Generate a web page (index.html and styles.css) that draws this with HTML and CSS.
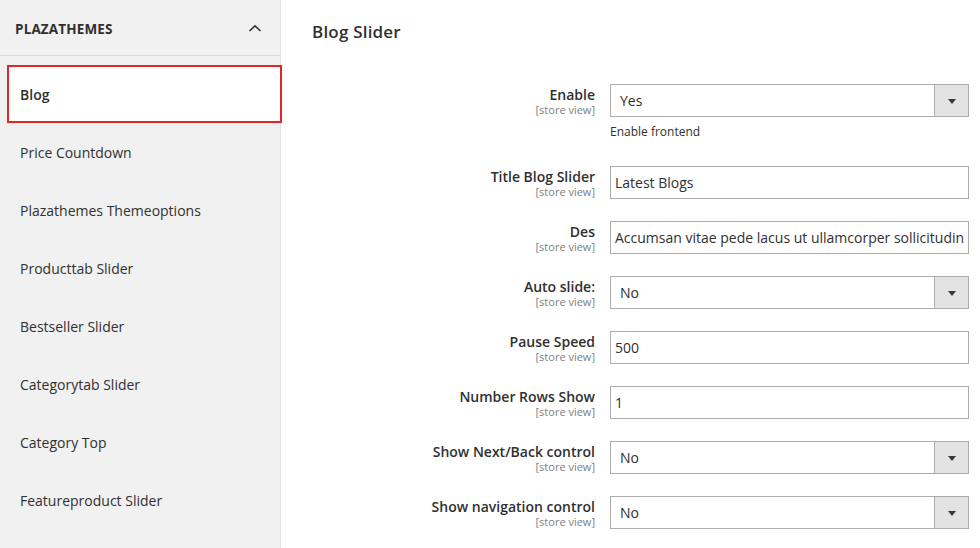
FILE: index.html
```html
<!DOCTYPE html>
<html>
<head>
<meta charset="utf-8">
<link rel="stylesheet" href="styles.css">
</head>
<body>
<div class="page">
  <aside class="sidebar">
    <div class="side-head">
      <span class="side-title">PLAZATHEMES</span>
      <svg class="chev" width="14" height="8" viewBox="0 0 14 8"><path d="M1.5 7 L7 1.8 L12.5 7" fill="none" stroke="#333" stroke-width="1.6"/></svg>
    </div>
    <ul class="side-list">
      <li class="side-item active">Blog</li>
      <li class="side-item">Price Countdown</li>
      <li class="side-item">Plazathemes Themeoptions</li>
      <li class="side-item">Producttab Slider</li>
      <li class="side-item">Bestseller Slider</li>
      <li class="side-item">Categorytab Slider</li>
      <li class="side-item">Category Top</li>
      <li class="side-item">Featureproduct Slider</li>
    </ul>
  </aside>
  <main class="main">
    <h1 class="title">Blog Slider</h1>
    <div class="form">
      <div class="row">
        <div class="label"><div class="lname">Enable</div><div class="scope">[store view]</div></div>
        <div class="field">
          <div class="select"><span class="val">Yes</span><span class="arrow"><i></i></span></div>
          <div class="note">Enable frontend</div>
        </div>
      </div>
      <div class="row">
        <div class="label"><div class="lname">Title Blog Slider</div><div class="scope">[store view]</div></div>
        <div class="field"><div class="input">Latest Blogs</div></div>
      </div>
      <div class="row">
        <div class="label"><div class="lname">Des</div><div class="scope">[store view]</div></div>
        <div class="field"><div class="input">Accumsan vitae pede lacus ut ullamcorper sollicitudin</div></div>
      </div>
      <div class="row">
        <div class="label"><div class="lname">Auto slide:</div><div class="scope">[store view]</div></div>
        <div class="field"><div class="select"><span class="val">No</span><span class="arrow"><i></i></span></div></div>
      </div>
      <div class="row">
        <div class="label"><div class="lname">Pause Speed</div><div class="scope">[store view]</div></div>
        <div class="field"><div class="input">500</div></div>
      </div>
      <div class="row">
        <div class="label"><div class="lname">Number Rows Show</div><div class="scope">[store view]</div></div>
        <div class="field"><div class="input">1</div></div>
      </div>
      <div class="row">
        <div class="label"><div class="lname">Show Next/Back control</div><div class="scope">[store view]</div></div>
        <div class="field"><div class="select"><span class="val">No</span><span class="arrow"><i></i></span></div></div>
      </div>
      <div class="row">
        <div class="label"><div class="lname">Show navigation control</div><div class="scope">[store view]</div></div>
        <div class="field"><div class="select"><span class="val">No</span><span class="arrow"><i></i></span></div></div>
      </div>
    </div>
  </main>
</div>
</body>
</html>
```

FILE: styles.css
```css
* { box-sizing: border-box; }
html, body { margin: 0; padding: 0; }
body {
  width: 980px;
  height: 548px;
  overflow: hidden;
  background: #fff;
  font-family: "Open Sans", "Liberation Sans", sans-serif;
  color: #303030;
}
.page { display: flex; height: 548px; }

.sidebar {
  width: 281px;
  flex: 0 0 281px;
  background: #f1f1f1;
  border-right: 1px solid #e3e3e3;
  height: 548px;
}
.side-head {
  height: 56px;
  border-bottom: 1px solid #dadada;
  display: flex;
  align-items: center;
  justify-content: space-between;
  padding: 2px 18px 0 15px;
}
.side-title {
  font-size: 13.5px;
  font-weight: 700;
  letter-spacing: 0.15px;
}
.chev { display: block; margin-top: -1px; }
.side-list {
  list-style: none;
  margin: 0;
  padding: 9px 0 0 0;
}
.side-item {
  height: 58px;
  display: flex;
  align-items: center;
  padding-left: 20px;
  font-size: 14px;
}
.side-item.active {
  background: #fff;
  border: 2px solid #e22626;
  margin-left: 7px;
  margin-right: -2px;
  padding-left: 11px;
  font-weight: 600;
  position: relative;
}

.main {
  flex: 1;
  padding: 0 11px 0 31px;
}
.title {
  margin: 0;
  padding-top: 20px;
  font-size: 17px;
  line-height: 24px;
  font-weight: 600;
  letter-spacing: 0.2px;
}
.form { margin-top: 40px; }
.row {
  display: grid;
  grid-template-columns: 1fr 359px;
  column-gap: 15px;
  margin-bottom: 22px;
}
.label { text-align: right; padding-top: 2px; }
.lname { font-size: 14px; font-weight: 600; line-height: 17px; }
.scope { font-size: 11px; line-height: 13px; color: #808080; }

.input, .select {
  height: 33px;
  border: 1px solid #adadad;
  background: #fff;
  display: flex;
  align-items: center;
  font-size: 14px;
  white-space: nowrap;
  overflow: hidden;
}
.input { padding-left: 4px; }
.select { padding-left: 9px; justify-content: space-between; }
.arrow {
  width: 34px;
  height: 100%;
  background: #e3e3e3;
  border-left: 1px solid #adadad;
  display: flex;
  align-items: center;
  justify-content: center;
}
.arrow i {
  width: 0; height: 0;
  border-left: 4px solid transparent;
  border-right: 4px solid transparent;
  border-top: 5px solid #41362f;
  margin-top: 1px;
}
.note {
  font-size: 12px;
  line-height: 20px;
  margin-top: 5px;
  margin-bottom: 2px;
}
```
